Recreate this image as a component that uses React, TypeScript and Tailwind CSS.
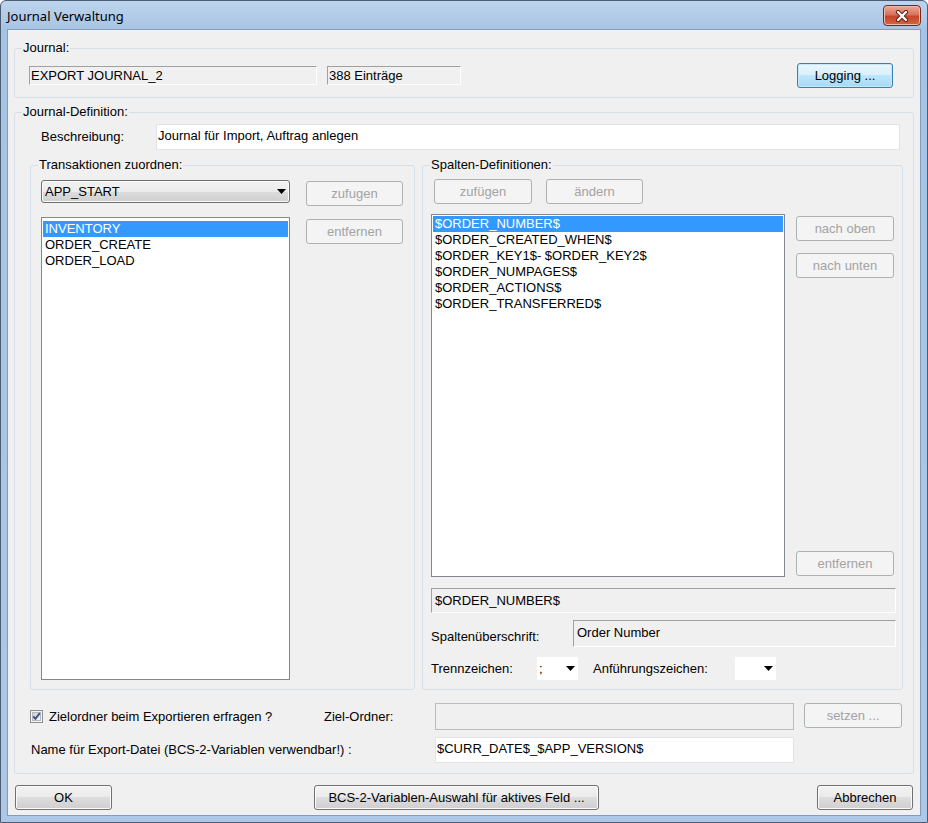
import React from "react";

type BtnProps = { children: React.ReactNode; className?: string; disabled?: boolean; primary?: boolean };

function Button({ children, className = "", disabled = false, primary = false }: BtnProps) {
  const base = "flex items-center justify-center rounded-[3px] border text-[13px] leading-[16px] shrink-0";
  const style = disabled
    ? "border-[#adb2b5] bg-[#f4f4f4] text-[#a3a3a3]"
    : primary
    ? "border-[#3c7fb1] bg-[linear-gradient(#eaf6fd_0%,#d9f0fc_50%,#bee6fd_50%,#a7d9f5_100%)] text-black shadow-[inset_0_0_0_1px_#c4e8fb]"
    : "border-[#707070] bg-[linear-gradient(#f2f2f2_0%,#ebebeb_50%,#dddddd_50%,#cfcfcf_100%)] text-black shadow-[inset_0_0_0_1px_#fbfbfb]";
  return <div className={`${base} ${style} ${className}`}>{children}</div>;
}

function Group({ label, className = "", children }: { label: string; className?: string; children: React.ReactNode }) {
  return (
    <fieldset className={`border border-[#d5dfe5] rounded-[3px] min-w-0 shrink-0 ${className}`}>
      <legend className="ml-[7px] px-[1px] text-[13px] leading-[16px] text-black">{label}</legend>
      {children}
    </fieldset>
  );
}

function Arrow() {
  return (
    <svg width="9" height="5" viewBox="0 0 9 5" className="shrink-0">
      <path d="M0 0 H9 L4.5 5 Z" fill="#000" />
    </svg>
  );
}

function CheckBox() {
  return (
    <svg width="13" height="13" viewBox="0 0 13 13" className="shrink-0">
      <defs>
        <linearGradient id="cbg" x1="0" y1="0" x2="1" y2="1">
          <stop offset="0" stopColor="#cbcfd5" />
          <stop offset="1" stopColor="#f6f6f6" />
        </linearGradient>
      </defs>
      <rect x="0.5" y="0.5" width="12" height="12" fill="#f4f4f4" stroke="#8e8f8f" />
      <rect x="2.5" y="2.5" width="8" height="8" fill="url(#cbg)" stroke="#b4b9bf" />
      <path d="M3.3 6.3 L5.4 8.8 L9.8 3.2" stroke="#3b4f82" strokeWidth="1.9" fill="none" />
    </svg>
  );
}

function CloseButton() {
  return (
    <div className="mt-[4px] w-[38px] h-[21px] rounded-[4px] border border-[#6e2a1a] bg-[linear-gradient(#e9a99a_0%,#d9735c_45%,#c7452a_55%,#d2653f_100%)] flex items-center justify-center shadow-[inset_0_0_0_1px_#f0b9a8]">
      <svg width="14" height="12" viewBox="0 0 14 12">
        <path d="M3 2 L11 10 M11 2 L3 10" stroke="#5a1d10" strokeWidth="4.2" strokeLinecap="round" />
        <path d="M3 2 L11 10 M11 2 L3 10" stroke="#ffffff" strokeWidth="2.4" strokeLinecap="round" />
      </svg>
    </div>
  );
}

const sunken = "border border-t-[#a0a0a0] border-l-[#a0a0a0] border-r-white border-b-white bg-[#f0f0f0]";

export default function App() {
  const leftItems = ["INVENTORY", "ORDER_CREATE", "ORDER_LOAD"];
  const rightItems = [
    "$ORDER_NUMBER$",
    "$ORDER_CREATED_WHEN$",
    "$ORDER_KEY1$- $ORDER_KEY2$",
    "$ORDER_NUMPAGES$",
    "$ORDER_ACTIONS$",
    "$ORDER_TRANSFERRED$",
  ];

  return (
    <div className="w-[928px] h-[823px] bg-white font-['Liberation_Sans',Arial,sans-serif] text-[13px] leading-[16px] text-black">
      <div className="w-[928px] h-[823px] border border-[#4a5d73] rounded-t-[6px] bg-[linear-gradient(#bdd4ed,#a7c3e3_30px,#adc8e6)] flex flex-col overflow-hidden">
        {/* Title bar */}
        <div className="h-[29px] flex items-start pl-[6px] pr-[6px] shrink-0">
          <div className="h-[29px] flex items-center font-['Noto_Sans',sans-serif] text-[13px] text-black">Journal Verwaltung</div>
          <div className="flex-1" />
          <CloseButton />
        </div>

        {/* Client area */}
        <div className="px-[7px]">
          <div className="h-[785px] bg-[#f0f0f0] shadow-[0_0_0_1px_#7f9dbf] flex flex-col">
            {/* Journal group */}
            <Group label="Journal:" className="mt-[10px] ml-[6px] w-[900px]">
              <div className="flex items-center pt-[7px] pb-[9px] pl-[14px] pr-[20px]">
                <div className={`w-[288px] h-[19px] pl-[1px] leading-[17px] ${sunken}`}>EXPORT JOURNAL_2</div>
                <div className={`ml-[10px] w-[134px] h-[19px] pl-[1px] leading-[17px] ${sunken}`}>388 Einträge</div>
                <div className="flex-1" />
                <Button primary className="w-[96px] h-[25px]">Logging ...</Button>
              </div>
            </Group>

            {/* Journal-Definition group */}
            <Group label="Journal-Definition:" className="mt-[6px] ml-[6px] w-[900px] h-[670px]">
              {/* Beschreibung */}
              <div className="mt-[4px] flex items-center">
                <div className="pl-[26px] w-[141px] shrink-0">Beschreibung:</div>
                <div className="w-[744px] h-[26px] bg-white border border-[#e2e3ea] pl-[1px] pt-[3px]">Journal für Import, Auftrag anlegen</div>
              </div>

              {/* Two sub groups */}
              <div className="mt-[7px] flex">
                <Group label="Transaktionen zuordnen:" className="ml-[15px] w-[385px] h-[533px]">
                  <div className="flex pl-[10px] pt-[7px]">
                    <div className="w-[249px] flex flex-col shrink-0">
                      <div className="h-[23px] rounded-[3px] border border-[#707070] bg-[linear-gradient(#f2f2f2_0%,#ebebeb_50%,#dddddd_50%,#cfcfcf_100%)] shadow-[inset_0_0_0_1px_#fbfbfb] flex items-center pl-[3px] pr-[3px]">
                        <span className="flex-1">APP_START</span>
                        <Arrow />
                      </div>
                      <div className="mt-[14px] h-[463px] bg-white border border-[#828790] px-[1px] pt-[3px]">
                        {leftItems.map((t, i) => (
                          <div key={t} className={i === 0 ? "h-[16px] pl-[2px] bg-[#3399ff] text-white" : "h-[16px] pl-[2px]"}>
                            {t}
                          </div>
                        ))}
                      </div>
                    </div>
                    <div className="ml-[16px] pt-[1px] flex flex-col">
                      <Button disabled className="w-[97px] h-[25px]">zufugen</Button>
                      <Button disabled className="mt-[13px] w-[97px] h-[25px]">entfernen</Button>
                    </div>
                  </div>
                </Group>

                <Group label="Spalten-Definitionen:" className="ml-[7px] w-[481px] h-[533px]">
                  <div className="pt-[6px] pl-[11px] flex">
                    <Button disabled className="w-[98px] h-[25px]">zufügen</Button>
                    <Button disabled className="ml-[14px] w-[97px] h-[25px]">ändern</Button>
                  </div>
                  <div className="mt-[10px] pl-[8px] flex">
                    <div className="w-[354px] h-[363px] bg-white border border-[#828790] px-[1px] pt-[1px] shrink-0">
                      {rightItems.map((t, i) => (
                        <div key={t} className={i === 0 ? "h-[16px] pl-[2px] bg-[#3399ff] text-white" : "h-[16px] pl-[2px]"}>
                          {t}
                        </div>
                      ))}
                    </div>
                    <div className="ml-[11px] h-[363px] pb-[1px] flex flex-col">
                      <Button disabled className="mt-[2px] w-[98px] h-[25px]">nach oben</Button>
                      <Button disabled className="mt-[12px] w-[98px] h-[25px]">nach unten</Button>
                      <div className="flex-1" />
                      <Button disabled className="w-[98px] h-[25px]">entfernen</Button>
                    </div>
                  </div>
                  <div className={`mt-[11px] ml-[8px] w-[465px] h-[25px] pl-[3px] flex items-center ${sunken}`}>$ORDER_NUMBER$</div>
                  <div className="mt-[7px] pl-[8px] flex">
                    <div className="w-[142px] pt-[9px] shrink-0">Spaltenüberschrift:</div>
                    <div className={`w-[323px] h-[27px] pl-[3px] pt-[4px] ${sunken}`}>Order Number</div>
                  </div>
                  <div className="mt-[10px] pl-[8px] flex items-center h-[23px]">
                    <div className="w-[106px] shrink-0">Trennzeichen:</div>
                    <div className="w-[41px] h-[23px] bg-white flex items-center pl-[2px] pr-[3px]">
                      <span className="flex-1">;</span>
                      <Arrow />
                    </div>
                    <div className="ml-[15px] w-[142px] shrink-0">Anführungszeichen:</div>
                    <div className="w-[41px] h-[23px] bg-white flex items-center pl-[2px] pr-[3px]">
                      <span className="flex-1" />
                      <Arrow />
                    </div>
                  </div>
                </Group>
              </div>

              {/* Zielordner row */}
              <div className="mt-[13px] flex items-start">
                <div className="ml-[15px] w-[294px] h-[27px] flex items-center shrink-0">
                  <CheckBox />
                  <span className="ml-[6px]">Zielordner beim Exportieren erfragen ?</span>
                </div>
                <div className="w-[111px] h-[27px] flex items-center shrink-0">Ziel-Ordner:</div>
                <div className="w-[359px] h-[27px] border border-[#b9bdc1] bg-[#f0f0f0] shrink-0" />
                <Button disabled className="ml-[10px] w-[98px] h-[25px]">setzen ...</Button>
              </div>

              {/* Name row */}
              <div className="mt-[7px] flex items-center">
                <div className="w-[420px] pl-[16px] shrink-0">Name für Export-Datei (BCS-2-Variablen verwendbar!) :</div>
                <div className="w-[359px] h-[26px] bg-white border border-[#e2e3ea] pl-[1px] pt-[3px]">$CURR_DATE$_$APP_VERSION$</div>
              </div>
            </Group>

            {/* Bottom buttons */}
            <div className="mt-[11px] flex">
              <Button className="ml-[7px] w-[97px] h-[25px]">OK</Button>
              <Button className="ml-[202px] w-[285px] h-[25px]">BCS-2-Variablen-Auswahl für aktives Feld ...</Button>
              <Button className="ml-[218px] w-[96px] h-[25px]">Abbrechen</Button>
            </div>
          </div>
        </div>
      </div>
    </div>
  );
}
